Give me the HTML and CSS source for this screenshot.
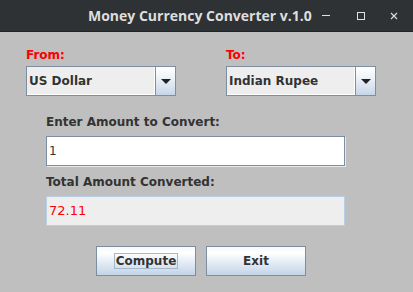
FILE: index.html
```html
<!DOCTYPE html>
<html>
<head>
<meta charset="utf-8">
<link rel="stylesheet" href="styles.css">
</head>
<body>
<div class="window">
  <div class="titlebar">
    <div class="title">Money Currency Converter v.1.0</div>
    <div class="ctrl ctrl-min"><span class="min-bar"></span></div>
    <div class="ctrl ctrl-max"><span class="max-box"></span></div>
    <div class="ctrl ctrl-close">
      <svg width="8" height="8" viewBox="0 0 8 8"><path d="M1 1 L7 7 M7 1 L1 7" stroke="#dcdcdc" stroke-width="1.2" fill="none"/></svg>
    </div>
  </div>
  <div class="content">
    <div class="selectors">
      <div class="col">
        <div class="label red">From:</div>
        <div class="combo">
          <div class="combo-text">US Dollar</div>
          <div class="combo-btn"><span class="arrow"></span></div>
        </div>
      </div>
      <div class="col">
        <div class="label red">To:</div>
        <div class="combo">
          <div class="combo-text">Indian Rupee</div>
          <div class="combo-btn"><span class="arrow"></span></div>
        </div>
      </div>
    </div>
    <div class="amounts">
      <div class="label">Enter Amount to Convert:</div>
      <div class="field input">1</div>
      <div class="label second">Total Amount Converted:</div>
      <div class="field result">72.11</div>
    </div>
    <div class="buttons">
      <div class="btn"><span class="focus">Compute</span></div>
      <div class="btn"><span class="plain">Exit</span></div>
    </div>
  </div>
</div>
</body>
</html>
```
FILE: styles.css
```css
html, body {
  margin: 0;
  padding: 0;
  background: #bfbfbf;
}
.window {
  width: 413px;
  height: 292px;
  background: #bfbfbf;
  font-family: "DejaVu Sans", sans-serif;
  overflow: hidden;
}
.titlebar {
  height: 32px;
  background: #2e3235;
  border-bottom: 1px solid #1f2224;
  box-sizing: border-box;
  display: flex;
  align-items: center;
  padding-left: 88px;
}
.title {
  width: 228px;
  color: #dedede;
  font-family: "Open Sans", sans-serif;
  font-weight: bold;
  font-size: 14px;
  white-space: nowrap;
}
.ctrl {
  display: flex;
  align-items: center;
  justify-content: center;
  height: 32px;
}
.ctrl-min { width: 18px; margin-left: 1px; }
.min-bar { width: 8px; height: 1.5px; background: #e0e0e0; }
.ctrl-max { width: 18px; margin-left: 17px; }
.max-box { width: 6px; height: 6px; border: 1.5px solid #e0e0e0; }
.ctrl-close { width: 18px; margin-left: 15px; }

.content {
  padding-top: 16px;
}
.label {
  font-weight: bold;
  font-size: 12px;
  line-height: 15px;
  height: 15px;
  color: #333333;
  white-space: nowrap;
}
.label.red { color: #ff0000; }
.selectors {
  display: flex;
  gap: 50px;
  padding-left: 26px;
}
.col { width: 150px; }
.combo {
  margin-top: 3px;
  height: 30px;
  box-sizing: border-box;
  border: 1px solid #7d8ea0;
  display: flex;
  background: #eeeeee;
}
.combo-text {
  flex: 1;
  padding-left: 2px;
  font-weight: bold;
  font-size: 12px;
  line-height: 28px;
  color: #333333;
  box-shadow: inset -1px -1px 0 #ffffff;
}
.combo-btn {
  width: 19px;
  border-left: 1px solid #7d8ea0;
  background: linear-gradient(#ffffff 0%, #f2f6fa 30%, #c6d6e8 100%);
  display: flex;
  align-items: center;
  justify-content: center;
}
.arrow {
  width: 0;
  height: 0;
  border-left: 5px solid transparent;
  border-right: 5px solid transparent;
  border-top: 5px solid #222222;
  margin-top: 1px;
}
.amounts {
  padding-left: 46px;
  margin-top: 19px;
  width: 299px;
}
.field {
  margin-top: 6px;
  height: 30px;
  box-sizing: border-box;
  padding-left: 2px;
  font-size: 12px;
  line-height: 28px;
}
.input {
  background: #ffffff;
  border: 1px solid #7d8ea0;
  box-shadow: 1px 1px 0 #e6eaee;
  color: #333333;
}
.result {
  background: #eeeeee;
  border: 1px solid #b8cfe5;
  color: #ff0000;
  font-size: 13px;
}
.label.second { margin-top: 9px; }
.buttons {
  display: flex;
  gap: 10px;
  padding-left: 96px;
  margin-top: 20px;
}
.btn {
  width: 100px;
  height: 30px;
  box-sizing: border-box;
  border: 1px solid #7d8ea0;
  background: linear-gradient(#f6f9fc 0%, #ffffff 20%, #e4ecf5 55%, #c3d4e7 100%);
  display: flex;
  align-items: center;
  justify-content: center;
  font-weight: bold;
  font-size: 12px;
  color: #333333;
}
.focus {
  border: 1px solid #a3b8cc;
  padding: 0 1px;
  line-height: 14px;
}
.plain { line-height: 16px; }
```
